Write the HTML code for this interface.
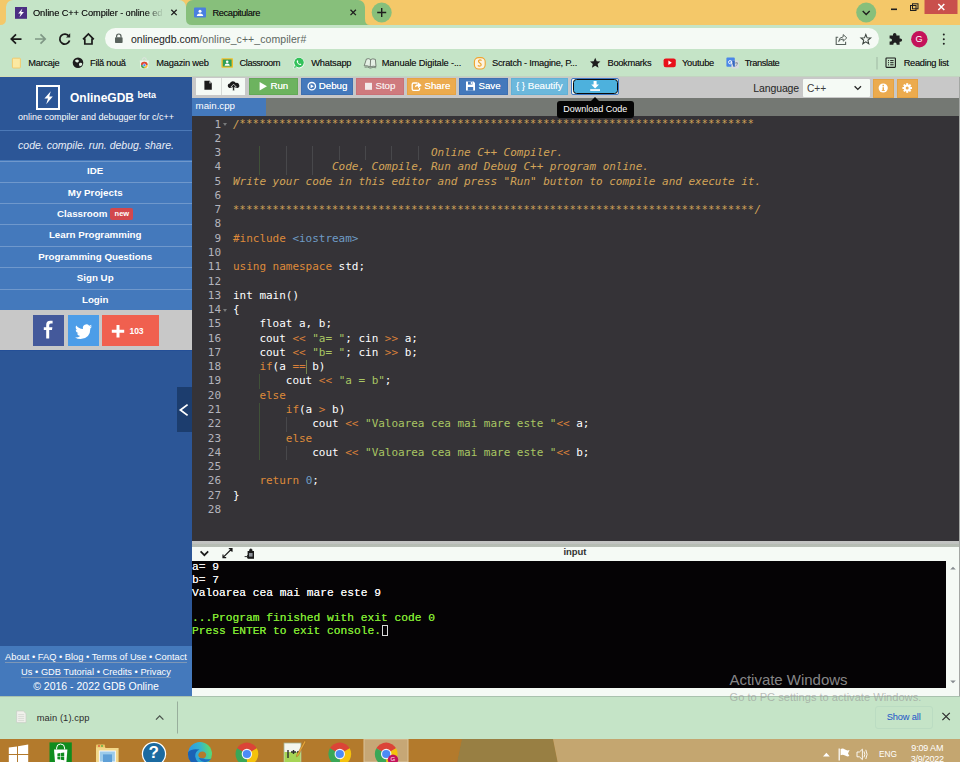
<!DOCTYPE html>
<html lang="en">
<head>
<meta charset="utf-8">
<title>Online C++ Compiler - online editor</title>
<style>
*{box-sizing:border-box;margin:0;padding:0}
html,body{width:960px;height:762px;overflow:hidden;background:#C5E4C7}
body{position:relative;font-family:"Liberation Sans",Arial,sans-serif;font-size:12px;color:#222}
.abs{position:absolute}
/* ---------- browser chrome ---------- */
#tabstrip{position:absolute;left:0;top:0;width:960px;height:26px;background:#F4C869}
#toolbar{position:absolute;left:0;top:25px;width:960px;height:52px;background:#C5E4C7}
.tab{position:absolute;top:0;height:26px;font-size:11px;color:#2a2a2a;white-space:nowrap}
.tt{font-size:9.3px;color:#161616;text-shadow:0 0 0.3px rgba(0,0,0,0.55);white-space:nowrap;line-height:13px}
#t1{letter-spacing:-0.113px}#t2{letter-spacing:-0.392px}
#tab1{left:6px;width:180px;background:#C5E4C7;border-radius:7px 7px 0 0}
#tab2{left:186px;width:179px;background:#87BF7B;border-radius:7px 7px 0 0;height:25px}
.bm{position:absolute;top:57.6px;font-size:9.3px;line-height:11px;color:#1a1a1a;text-shadow:0 0 0.3px rgba(0,0,0,0.5);white-space:nowrap}
#omni{position:absolute;left:105px;top:28px;width:774px;height:21px;border-radius:10.5px;background:#F5FAF5}
#url{position:absolute;left:26px;top:4.5px;font-size:10.5px;line-height:13px;color:#222;white-space:nowrap}
#u2{letter-spacing:0.064px}
#url span{color:#5c6660}
/* ---------- page ---------- */
#sidebar{position:absolute;left:0;top:76px;width:192px;height:620px;background:#2C5697;color:#fff}
#menu{position:absolute;left:0;top:160px;width:192px;height:151px;background:#4479BC}
#menu>div{position:absolute;left:0;width:192px;height:21.5px;border-top:1px solid #6F98CC;text-align:center;font-weight:bold;font-size:9.75px;line-height:20px;color:#fff;white-space:nowrap;padding-right:1.6px}
#sfoot u{text-decoration:none;border-bottom:1px solid rgba(160,170,180,0.62)}
#social{position:absolute;left:0;top:310px;width:192px;height:40px;background:#C8C8C8}
#sfoot{position:absolute;left:0;top:646px;width:192px;height:50px;background:#4479BC;color:#fff;text-align:center}
#ptool{position:absolute;left:192px;top:76px;width:768px;height:22px;background:#C8C8C8}
.btn{position:absolute;top:2px;height:17px;color:#fff;font-size:9.75px;line-height:13.6px;white-space:nowrap;letter-spacing:-0.05px;text-shadow:0 0 0.35px rgba(255,255,255,0.8)}
.btn span{position:absolute;top:0}
#ftabs{position:absolute;left:192px;top:98px;width:768px;height:18px;background:#747873}
#ftab{position:absolute;left:0;top:0;width:74px;height:18px;background:#4479BC;color:#fff;font-size:9.75px;line-height:16px;padding-left:3.6px;letter-spacing:-0.02px}
#editor{position:absolute;left:192px;top:116px;width:768px;height:425px;background:#353337;overflow:hidden}
#code{position:absolute;left:0;top:1.6px;width:768px;font-family:"DejaVu Sans Mono","Liberation Mono",monospace;font-size:11px;letter-spacing:-0.022px;color:#fff}
.ln{position:absolute;left:0;height:14.27px;line-height:14.27px;white-space:pre}
.ln i.n{position:absolute;left:0;width:29px;text-align:right;color:#B4B4BC;font-style:normal}
.ln b{position:absolute;left:41px;font-weight:normal;white-space:pre}
.c{color:#D3A458;font-style:italic}
.st{font-size:10px;letter-spacing:0.58px;position:relative;top:-0.2px;font-style:normal}
.k{color:#DE8A3A}
.s{color:#A9C663}
.h{color:#6F9CC6}
.o{color:#D9803A}
.g{position:absolute;width:1px;background:#48484b}
#split{position:absolute;left:192px;top:540.6px;width:768px;height:6.3px;z-index:2;background:linear-gradient(180deg,#C3C4C3 0,#C1C3C1 40%,#B5BCB3 55%,#B7BEB5 100%)}
#chead{position:absolute;left:192px;top:546px;width:768px;height:15px;background:#F5FAF5}
#console{position:absolute;left:192px;top:561px;width:754.4px;height:127px;background:#050305;font-family:"Liberation Mono",monospace;font-size:11.25px;line-height:12.93px;color:#F2F2F2;white-space:pre;font-weight:normal;text-shadow:0 0 0.5px currentColor}
#cscroll{position:absolute;left:946.4px;top:561px;width:13.6px;height:127px;background:#F5FAF5}
#cbot{position:absolute;left:192px;top:688px;width:768px;height:8px;background:#F5FAF5}
#dlbar{position:absolute;left:0;top:696px;width:960px;height:43px;background:#C5E4C7;border-top:1px solid #A9C2AE}
#taskbar{position:absolute;left:0;top:738.6px;width:960px;height:23.4px;background:#B37A2C;overflow:hidden}
#console .gr{color:#7FE331}
.cl{position:absolute;left:0;height:12.93px;white-space:pre}
#console .cur{display:inline-block;width:6px;height:11px;border:1px solid #d8d8d8;vertical-align:-2px;margin-left:0.5px}
</style>
</head>
<body>
<div id="tabstrip"></div>
<div id="toolbar"></div>
<!-- tabs -->
<div class="tab" id="tab2"></div>
<div class="tab" id="tab1"></div>
<svg class="abs" style="left:0;top:0" width="400" height="26" viewBox="0 0 400 26">
  <!-- curved feet of active tab -->
  <path d="M0 26 L0 25 Q6 25 6 19 L6 26 Z" fill="#C5E4C7"/>
  <path d="M186 19 Q186 25 192 25 L192 26 L186 26 Z" fill="#C5E4C7"/>
  <!-- favicon 1 -->
  <rect x="15" y="7" width="12" height="11.8" fill="#4B2E83"/>
  <path d="M22.4 8.4 L18.2 13.5 H20.7 L19.5 17.3 L23.9 12.1 H21.3 Z" fill="#fff"/>
  <!-- close 1 -->
  <path d="M171.3 9.7 L176.7 15.1 M176.7 9.7 L171.3 15.1" stroke="#1f1f1f" stroke-width="1.3" fill="none"/>
  <!-- favicon 2 -->
  <rect x="194" y="7.5" width="12" height="10" rx="1" fill="#4A7FE0"/>
  <circle cx="200" cy="11.3" r="1.5" fill="#fff"/>
  <path d="M196.8 16 Q196.8 13.4 200 13.4 Q203.2 13.4 203.2 16 Z" fill="#fff"/>
  <!-- close 2 -->
  <path d="M350.5 9.7 L355.9 15.1 M355.9 9.7 L350.5 15.1" stroke="#1f1f1f" stroke-width="1.3" fill="none"/>
  <path d="M365 19 Q365 25 370 25 L365 25 Z" fill="#87BF7B"/>
  <!-- new tab -->
  <circle cx="381.7" cy="12.5" r="10" fill="#87BF7B"/>
  <path d="M377.2 12.5 H386.2 M381.7 8 V17" stroke="#1f1f1f" stroke-width="1.4" fill="none"/>
</svg>
<div class="abs tt" style="left:33px;top:6.6px;width:131px;overflow:hidden;-webkit-mask-image:linear-gradient(90deg,#000 0,#000 112px,transparent 131px);mask-image:linear-gradient(90deg,#000 0,#000 112px,transparent 131px)"><span id="t1">Online C++ Compiler - online ed</span></div>
<div class="abs tt" style="left:212.5px;top:6.6px"><span id="t2">Recapitulare</span></div>
<!-- window controls -->
<svg class="abs" style="left:840px;top:0" width="120" height="26" viewBox="0 0 120 26">
  <circle cx="26.2" cy="12.5" r="10" fill="#87BF7B"/>
  <path d="M22.7 11 L26.2 14.5 L29.7 11" stroke="#1f1f1f" stroke-width="1.4" fill="none"/>
  <rect x="51" y="8.5" width="6" height="1.6" fill="#1f1f1f"/>
  <rect x="70.5" y="5.5" width="5.5" height="5" fill="none" stroke="#1f1f1f" stroke-width="1"/>
  <rect x="72.5" y="3.8" width="5.5" height="5" fill="none" stroke="#1f1f1f" stroke-width="1"/>
  <rect x="84.5" y="0" width="33" height="14" fill="#C9504C"/>
  <path d="M98.3 4 L104.3 10 M104.3 4 L98.3 10" stroke="#fff" stroke-width="1.5" fill="none"/>
</svg>
<!-- nav icons -->
<svg class="abs" style="left:0;top:26px" width="105" height="26" viewBox="0 0 105 26">
  <path d="M21.5 13 H11.5 M16 8.3 L11.3 13 L16 17.7" stroke="#1a1a1a" stroke-width="1.75" fill="none"/>
  <path d="M35 13 H45 M40.5 8.3 L45.2 13 L40.5 17.7" stroke="#7f9785" stroke-width="1.7" fill="none"/>
  <path d="M69 10.3 A5 5 0 1 0 69.6 14.6" stroke="#1a1a1a" stroke-width="1.75" fill="none"/>
  <path d="M70.2 7.2 V11.4 H66 Z" fill="#1f1f1f"/>
  <path d="M83 13.4 L88.4 8 L93.8 13.4 M84.8 12.4 V18 H92 V12.4" stroke="#1a1a1a" stroke-width="1.7" fill="none"/>
</svg>
<div id="omni">
  <svg class="abs" style="left:9px;top:5px" width="10" height="11" viewBox="0 0 10 11"><rect x="1" y="4.2" width="7.6" height="5.8" rx="0.8" fill="#58625c"/><path d="M2.6 4.6 V3.2 A2.2 2.2 0 0 1 7 3.2 V4.6" stroke="#58625c" stroke-width="1.2" fill="none"/></svg>
  <div id="url"><span id="u1" style="color:#1c1c1c">onlinegdb.com</span><span id="u2">/online_c++_compiler#</span></div>
  <svg class="abs" style="left:728px;top:3px" width="44" height="16" viewBox="0 0 44 16">
    <path d="M5.2 6.2 H3.2 V13.5 H12.6 V10.8" stroke="#58625c" stroke-width="1.1" fill="none"/>
    <path d="M5.6 10.6 Q6 6.2 10.2 5.8 V3.6 L13.8 6.9 L10.2 10.2 V8 Q7.4 8 5.6 10.6 Z" stroke="#58625c" stroke-width="1" fill="none"/>
    <path d="M32.80 3.50 L34.09 6.82 L37.65 7.02 L34.89 9.28 L35.80 12.73 L32.80 10.80 L29.80 12.73 L30.71 9.28 L27.95 7.02 L31.51 6.82 Z" stroke="#3a423d" stroke-width="1.05" fill="none"/>
  </svg>
</div>
<svg class="abs" style="left:884px;top:28px" width="72" height="22" viewBox="0 0 72 22">
  <path d="M5.6 7.4 H9 V6.6 A1.7 1.7 0 0 1 12.4 6.6 V7.4 H15.6 V10.4 H16.4 A1.7 1.7 0 0 1 16.4 13.8 H15.6 V16.8 H12.6 V16 A1.6 1.6 0 0 0 9.4 16 V16.8 H5.6 V13.6 H6.4 A1.6 1.6 0 0 0 6.4 10.4 H5.6 Z" fill="#1f1f1f"/>
  <circle cx="35.3" cy="11.2" r="8.2" fill="#C4125A"/>
  <rect x="58.8" y="5.6" width="2" height="2" rx="1" fill="#1f1f1f"/><rect x="58.8" y="10.2" width="2" height="2" rx="1" fill="#1f1f1f"/><rect x="58.8" y="14.8" width="2" height="2" rx="1" fill="#1f1f1f"/>
</svg>
<div class="abs" style="left:915.6px;top:34.2px;font-size:9px;color:#fff;font-weight:normal">G</div>
<!-- bookmarks -->
<div id="bmbar">
<svg class="abs" style="left:0;top:52px" width="960" height="24" viewBox="0 0 960 24">
  <!-- folder -->
  <rect x="12.4" y="6.2" width="8" height="9.8" rx="0.8" fill="#FBE9A2" stroke="#F3C766" stroke-width="0.9"/>
  <!-- globe -->
  <circle cx="78" cy="10.8" r="5.3" fill="#1d1d1d"/>
  <path d="M75 8.4 Q77 6.8 78.6 8 Q79.6 9.6 77.6 10.4 Q75.4 10.6 75 8.4 Z M79.4 11 Q82 10.4 82.4 12.2 Q81.4 14.6 79.6 14.2 Q78.4 12.6 79.4 11 Z" fill="#dff0e0"/>
  <!-- web store -->
  <path d="M139.8 8.4 H148.8 L148.2 16.2 H140.4 Z" fill="#EEF0EE"/>
  <path d="M142.4 8.6 V7.6 A1.9 1.9 0 0 1 146.2 7.6 V8.6" stroke="#E2E4E2" stroke-width="0.9" fill="none"/>
  <circle cx="144.3" cy="13" r="3.3" fill="#F2C230"/>
  <path d="M141 13 A3.3 3.3 0 0 1 147.6 13 Z" fill="#DB4437"/>
  <path d="M141 13 A3.3 3.3 0 0 0 144.3 16.3 L144.3 13 Z" fill="#3FA55A"/>
  <circle cx="144.3" cy="13.2" r="1.4" fill="#4C8BF5" stroke="#fff" stroke-width="0.5"/>
  <!-- classroom -->
  <rect x="221.4" y="6.2" width="11.6" height="9.6" rx="0.8" fill="#F0BE2C"/>
  <rect x="222.8" y="7.5" width="8.8" height="7" fill="#2F9E58"/>
  <circle cx="227.2" cy="9.8" r="1.3" fill="#fff"/>
  <path d="M224.6 13.8 Q224.6 11.6 227.2 11.6 Q229.8 11.6 229.8 13.8 Z" fill="#fff"/>
  <!-- whatsapp -->
  <path d="M293.2 16.6 L294.2 13.6 A5.5 5.5 0 1 1 296.2 15.6 Z" fill="#fff"/>
  <circle cx="299" cy="10.6" r="4.8" fill="#33C15A"/>
  <path d="M294 16 L294.9 13.4 L296.6 15.2 Z" fill="#33C15A"/>
  <path d="M297 8.4 Q296.4 9 297 10.4 Q298 12.4 300 13 Q301 13.2 301.4 12.4 L300.2 11.6 L299.6 12 Q298.4 11.4 297.9 10.2 L298.3 9.6 L297.7 8.3 Z" fill="#fff"/>
  <!-- book -->
  <path d="M364.2 13.8 L366.4 7 Q369 6 370.6 7.6 Q372.6 6.2 375.4 7.4 L376 14.6 Q373 13.6 370.2 15 Q367.4 13.2 364.2 13.8 Z M370.6 7.6 L370.2 15" stroke="#606860" stroke-width="0.8" fill="#e4efe4"/>
  <path d="M364.6 15.2 Q367.4 14.4 370.2 16.2 Q373 14.8 376.2 15.8" stroke="#606860" stroke-width="0.7" fill="none"/>
  <!-- scratch -->
  <rect x="474.4" y="5.6" width="10.8" height="11.4" rx="4.2" fill="#fdf3e0" stroke="#EFA42F" stroke-width="1.1"/>
  <path d="M481.6 8.4 Q479.8 7.2 478.6 8.6 Q478 10 479.8 11 Q481.8 12.2 480.8 13.6 Q479.4 14.8 477.8 13.6" stroke="#EFA42F" stroke-width="1.2" fill="none"/>
  <!-- star -->
  <path d="M595.2 5.8 L596.7 9.3 L600.4 9.6 L597.6 12 L598.5 15.7 L595.2 13.7 L591.9 15.7 L592.8 12 L590 9.6 L593.7 9.3 Z" fill="#1d1d1d"/>
  <!-- youtube -->
  <rect x="663.6" y="6.4" width="12.2" height="8.8" rx="2.2" fill="#E8111A"/>
  <path d="M668.4 8.6 L671.8 10.8 L668.4 13 Z" fill="#fff"/>
  <!-- translate -->
  <rect x="726.4" y="5.4" width="8.4" height="9.4" rx="1" fill="#4A86E8"/>
  <rect x="731.4" y="8.4" width="7.4" height="8.2" rx="1" fill="#d7dbe0"/>
  <path d="M731.4 8.4 H734.8 V14.8 H733.4 Z" fill="#3467c2"/>
  <path d="M735 11 H738 M736.4 10.2 V11 M735.4 14.4 Q737.4 13 737.4 11" stroke="#6f7780" stroke-width="0.6" fill="none"/>
  <circle cx="730.2" cy="10.2" r="1.7" fill="none" stroke="#fff" stroke-width="0.9"/>
  <path d="M730.2 10.2 H732" stroke="#fff" stroke-width="0.9"/>
  <!-- separator -->
  <rect x="876.5" y="5" width="1" height="12.5" fill="#9fb7a3"/>
  <!-- reading list -->
  <rect x="886" y="6" width="9.4" height="9.4" rx="0.6" fill="none" stroke="#1d1d1d" stroke-width="1.1"/>
  <path d="M888 8.6 H889 M890.2 8.6 H893.6 M888 10.7 H889 M890.2 10.7 H893.6 M888 12.8 H889 M890.2 12.8 H893.6" stroke="#1d1d1d" stroke-width="1"/>
</svg>
<span class="bm" style="left:28.25px;letter-spacing:-0.261px">Marcaje</span>
<span class="bm" style="left:90px;letter-spacing:-0.278px">Filă nouă</span>
<span class="bm" style="left:156.25px;letter-spacing:-0.207px">Magazin web</span>
<span class="bm" style="left:239.5px;letter-spacing:-0.438px">Classroom</span>
<span class="bm" style="left:311.25px;letter-spacing:-0.232px">Whatsapp</span>
<span class="bm" style="left:381.75px;letter-spacing:-0.152px">Manuale Digitale -...</span>
<span class="bm" style="left:492px;letter-spacing:-0.251px">Scratch - Imagine, P...</span>
<span class="bm" style="left:607.5px;letter-spacing:-0.306px">Bookmarks</span>
<span class="bm" style="left:682px;letter-spacing:-0.257px">Youtube</span>
<span class="bm" style="left:744.7px;letter-spacing:-0.414px">Translate</span>
<span class="bm" style="left:903.7px;letter-spacing:-0.307px">Reading list</span>
</div>

<div id="sidebar">
  <div class="abs" style="left:36px;top:9px;width:24px;height:25px;border:2px solid #fff"></div>
  <svg class="abs" style="left:36px;top:9px" width="25" height="25" viewBox="0 0 25 25"><path d="M14.8 6.2 L8.4 13.6 H12 L10.2 19.2 L16.8 11.6 H13.2 Z" fill="#fff"/></svg>
  <div class="abs" id="sb-title" style="left:70px;top:14.8px;font-weight:bold;font-size:12px;line-height:15px;white-space:nowrap">OnlineGDB</div>
  <div class="abs" id="sb-beta" style="left:137.5px;top:13.8px;font-weight:bold;font-size:9px;line-height:11px">beta</div>
  <div class="abs" id="sb-sub" style="left:0;top:35.5px;width:192px;text-align:center;font-size:9px;line-height:11px;white-space:nowrap">online compiler and debugger for c/c++</div>
  <div class="abs" style="left:0;top:54px;width:192px;height:1px;background:#4C79B7"></div>
  <div class="abs" id="sb-tag" style="left:0;top:63px;width:192px;text-align:center;font-size:10.5px;line-height:13px;font-style:italic;white-space:nowrap;color:#e8eef8">code. compile. run. debug. share.</div>
  <div class="abs" style="left:0;top:274px;width:192px;height:1px;background:#244F97"></div>
  <div class="abs" style="left:177px;top:311px;width:15px;height:45px;background:#1C3D6E"></div>
  <svg class="abs" style="left:177px;top:311px" width="15" height="45" viewBox="0 0 15 45"><path d="M10.6 17.6 L3.4 23 L10.6 28.4" stroke="#fff" stroke-width="1.8" fill="none"/></svg>
</div>
<div id="menu">
  <div style="top:0.8px;line-height:18.4px">IDE</div>
  <div style="top:21.5px">My Projects</div>
  <div style="top:42.9px"><span style="margin-right:26px">Classroom</span><span class="abs" style="left:110.3px;top:4.2px;width:23.2px;height:11.6px;border-radius:2px;background:#D2484D;font-size:7.5px;line-height:11.4px;font-style:normal;text-align:center;padding-right:0">new</span></div>
  <div style="top:64.3px">Learn Programming</div>
  <div style="top:85.5px">Programming Questions</div>
  <div style="top:107.2px">Sign Up</div>
  <div style="top:128.9px">Login</div>
</div>
<div id="social">
  <div class="abs" style="left:33px;top:5px;width:31px;height:31px;background:#44599B"></div>
  <div class="abs" style="left:68px;top:5px;width:31px;height:31px;background:#4C9DE8"></div>
  <div class="abs" style="left:102px;top:5px;width:57px;height:31px;background:#F0604F"></div>
  <svg class="abs" style="left:33px;top:5px" width="126" height="31" viewBox="0 0 126 31">
    <path d="M19.6 8.4 H17.8 Q16.2 8.4 16.2 10.2 V12.2 H19.4 L19 15 H16.2 V23.4 H13.2 V15 H10.8 V12.2 H13.2 V9.8 Q13.2 5.8 17.2 5.8 H19.6 Z" fill="#fff"/>
    <path d="M59.2 11.2 Q58.2 11.7 57 11.8 Q58.2 11.1 58.6 9.8 Q57.5 10.5 56.2 10.7 A3.6 3.6 0 0 0 50 14 Q45.8 13.8 43.2 10.4 Q41.8 13.2 44.2 15.2 Q43.4 15.2 42.6 14.8 Q42.7 17.5 45.5 18.3 Q44.7 18.5 43.9 18.4 Q44.7 20.6 47.2 20.9 Q45 22.6 42 22.4 Q44.6 24 47.6 24 Q57.2 23.6 57.4 13.2 Q58.5 12.4 59.2 11.2 Z" fill="#fff"/>
    <path d="M78.8 16.2 H91.2 M85 10 V22.4" stroke="#fff" stroke-width="3" fill="none"/>
  </svg>
  <div class="abs" style="left:129.5px;top:15.5px;font-size:8.6px;line-height:10px;font-weight:bold;color:#fff;letter-spacing:-0.1px">103</div>
</div>
<div id="sfoot">
  <div id="sf1" style="position:absolute;left:0;top:5px;width:192px;font-size:9.3px;line-height:12px;white-space:nowrap"><u>About • FAQ • Blog • Terms of Use • Contact</u></div>
  <div id="sf2" style="position:absolute;left:0;top:20px;width:192px;font-size:9.3px;line-height:12px;white-space:nowrap"><u>Us • GDB Tutorial • Credits • Privacy</u></div>
  <div id="sf3" style="position:absolute;left:0;top:33.5px;width:192px;font-size:10.5px;line-height:13px;white-space:nowrap">© 2016 - 2022 GDB Online</div>
</div>
<div id="ptool">
  <div class="btn" style="left:4px;width:24.5px;background:#F5FAF5"></div>
  <div class="btn" style="left:29px;width:24px;background:#F5FAF5;border-left:1px solid #d6dad6"></div>
  <div class="btn" style="left:57px;width:49px;background:#6DB35F;border:1px solid #63A957"><span style="left:20.5px">Run</span></div>
  <div class="btn" style="left:109px;width:51.5px;background:#4479BC;border:1px solid #3E6FB0"><span style="left:16.8px">Debug</span></div>
  <div class="btn" style="left:163.5px;width:48.5px;background:#CF7A7E;border:1px solid #C97278"><span style="left:19px;color:#f6e6e6">Stop</span></div>
  <div class="btn" style="left:214.5px;width:49.5px;background:#ECAB4E;border:1px solid #E6A444"><span style="left:17px">Share</span></div>
  <div class="btn" style="left:267px;width:49px;background:#4479BC;border:1px solid #3E6FB0"><span style="left:18.5px">Save</span></div>
  <div class="btn" style="left:319px;width:57px;background:#6CB8DC;border:1px solid #62B0D6"><span style="left:4px;color:#eef8fc">{ } Beautify</span></div>
  <div class="abs" style="left:379.2px;top:1.8px;width:48px;height:17.4px;border:1px solid #3F79C6;border-radius:2px;background:#F5FAF5"></div>
  <div class="abs" style="left:380.6px;top:3px;width:45.2px;height:15px;border:1.9px solid #0a0a0a;border-radius:3.5px;background:#4DB1DD"></div>
  <svg class="abs" style="left:0;top:0" width="440" height="22" viewBox="0 0 440 22">
    <!-- file -->
    <path d="M12.4 4.8 H17 L19.8 7.6 V13.8 H12.4 Z" fill="#1b1b1b"/><path d="M17.2 4.8 V7.4 H19.8 Z" fill="#f5faf5" stroke="#1b1b1b" stroke-width="0.5"/>
    <!-- cloud upload -->
    <path d="M37.4 12 A2.3 2.3 0 0 1 37.8 7.5 A3.2 3.2 0 0 1 43.8 7.1 A2.5 2.5 0 0 1 45.6 12 Z" fill="#1b1b1b"/>
    <path d="M41.6 8.2 L44.4 11.2 H42.6 V14.8 H40.6 V11.2 H38.8 Z" fill="#1b1b1b" stroke="#f5faf5" stroke-width="0.7"/>
    <!-- run -->
    <path d="M67.6 6 L75 10.3 L67.6 14.6 Z" fill="#fff"/>
    <!-- debug -->
    <circle cx="119.8" cy="10.2" r="3.7" fill="none" stroke="#fff" stroke-width="1.3"/><path d="M118.6 8.2 L121.8 10.2 L118.6 12.2 Z" fill="#fff"/>
    <!-- stop -->
    <rect x="173" y="6.8" width="7" height="7" fill="#f3e9e9"/>
    <!-- share -->
    <path d="M225.6 7 H221.6 Q220.2 7 220.2 8.4 V13 Q220.2 14.4 221.6 14.4 H226.2 Q227.6 14.4 227.6 13 V11.8" stroke="#fff" stroke-width="1.3" fill="none"/>
    <path d="M222.8 11.6 Q223 8.2 226 8.2 V6.2 L229.6 9.2 L226 12.2 V10.2 Q224 10.2 222.8 11.6 Z" fill="#fff"/>
    <!-- save -->
    <path d="M274 5.6 H281.6 L283 7 V14.6 H274 Z" fill="#fff"/><rect x="276" y="5.6" width="4.4" height="3" fill="#4479BC"/><rect x="278.8" y="6" width="1.1" height="2.2" fill="#fff"/><rect x="275.8" y="11" width="5.4" height="3.6" fill="#4479BC"/>
    <!-- download -->
    <path d="M401.6 5 H404.6 V8.6 H407 L403.1 12.4 L399.2 8.6 H401.6 Z" fill="#fff"/><rect x="398.2" y="13.2" width="9.8" height="1.7" fill="#fff"/>
  </svg>
  <div class="abs" style="left:561.3px;top:6px;font-size:10.5px;line-height:13px;color:#262626;letter-spacing:-0.12px">Language</div>
  <div class="abs" style="left:611px;top:2.5px;width:66.5px;height:18.5px;background:#F5FAF5;border-radius:1px"></div>
  <div class="abs" style="left:615px;top:6px;font-size:10.2px;line-height:13px;color:#3c3c3c">C++</div>
  <svg class="abs" style="left:660px;top:7px" width="12" height="10" viewBox="0 0 12 10"><path d="M2.6 3.2 L5.8 6.4 L9 3.2" stroke="#222" stroke-width="1.3" fill="none"/></svg>
  <div class="abs" style="left:681px;top:3px;width:20.5px;height:18.5px;background:#ECAB4E;border:1px solid #E5A343"></div>
  <div class="abs" style="left:705px;top:3px;width:20.5px;height:18.5px;background:#ECAB4E;border:1px solid #E5A343"></div>
  <svg class="abs" style="left:681px;top:3px" width="46" height="19" viewBox="0 0 46 19">
    <circle cx="10.2" cy="9" r="4.6" fill="#fff"/><rect x="9.5" y="5.8" width="1.5" height="1.5" fill="#ECAB4E"/><rect x="9.5" y="8.2" width="1.5" height="3.4" fill="#ECAB4E"/><rect x="8.8" y="11" width="3" height="0.9" fill="#ECAB4E"/>
    <g fill="#fff"><circle cx="34.2" cy="9" r="3.5"/><rect x="33.2" y="4.2" width="2" height="9.6"/><rect x="29.4" y="8" width="9.6" height="2"/><rect x="33.2" y="4.2" width="2" height="9.6" transform="rotate(45 34.2 9)"/><rect x="33.2" y="4.2" width="2" height="9.6" transform="rotate(-45 34.2 9)"/></g>
    <circle cx="34.2" cy="9" r="1.5" fill="#ECAB4E"/>
  </svg>
</div>
<!-- tooltip -->
<div class="abs" style="left:557px;top:101.2px;width:76.5px;height:16.6px;background:#050505;border-radius:3px;z-index:5;color:#fff;font-size:9px;line-height:16px;text-align:center">Download Code</div>
<div class="abs" style="left:591.2px;top:97.4px;width:0;height:0;border-left:4px solid transparent;border-right:4px solid transparent;border-bottom:4px solid #050505;z-index:5"></div>
<div id="ftabs"><div id="ftab">main.cpp</div></div>
<div id="editor"><div id="code">
<div class="ln" style="top:0.0px"><i class="n">1</i><b><span class="c">/<span class="st">******************************************************************************</span></span></b></div>
<div class="ln" style="top:14.27px"><i class="n">2</i><b></b></div>
<div class="ln" style="top:28.54px"><i class="n">3</i><b><span class="c">                              Online C++ Compiler.</span></b></div>
<div class="ln" style="top:42.81px"><i class="n">4</i><b><span class="c">               Code, Compile, Run and Debug C++ program online.</span></b></div>
<div class="ln" style="top:57.08px"><i class="n">5</i><b><span class="c">Write your code in this editor and press "Run" button to compile and execute it.</span></b></div>
<div class="ln" style="top:71.35px"><i class="n">6</i><b></b></div>
<div class="ln" style="top:85.62px"><i class="n">7</i><b><span class="c"><span class="st">*******************************************************************************</span>/</span></b></div>
<div class="ln" style="top:99.89px"><i class="n">8</i><b></b></div>
<div class="ln" style="top:114.16px"><i class="n">9</i><b><span class="k">#include </span><span class="h">&lt;iostream&gt;</span></b></div>
<div class="ln" style="top:128.43px"><i class="n">10</i><b></b></div>
<div class="ln" style="top:142.7px"><i class="n">11</i><b><span class="k">using namespace</span> std;</b></div>
<div class="ln" style="top:156.97px"><i class="n">12</i><b></b></div>
<div class="ln" style="top:171.24px"><i class="n">13</i><b>int main()</b></div>
<div class="ln" style="top:185.51px"><i class="n">14</i><b>{</b></div>
<div class="ln" style="top:199.78px"><i class="n">15</i><b>    float a, b;</b></div>
<div class="ln" style="top:214.05px"><i class="n">16</i><b>    cout <span class="o">&lt;&lt;</span> <span class="s">"a= "</span>; cin <span class="o">&gt;&gt;</span> a;</b></div>
<div class="ln" style="top:228.32px"><i class="n">17</i><b>    cout <span class="o">&lt;&lt;</span> <span class="s">"b= "</span>; cin <span class="o">&gt;&gt;</span> b;</b></div>
<div class="ln" style="top:242.59px"><i class="n">18</i><b>    <span class="k">if</span>(a <span class="o">==</span> b)</b></div>
<div class="ln" style="top:256.86px"><i class="n">19</i><b>        cout <span class="o">&lt;&lt;</span> <span class="s">"a = b"</span>;</b></div>
<div class="ln" style="top:271.13px"><i class="n">20</i><b>    <span class="k">else</span></b></div>
<div class="ln" style="top:285.4px"><i class="n">21</i><b>        <span class="k">if</span>(a <span class="o">&gt;</span> b)</b></div>
<div class="ln" style="top:299.67px"><i class="n">22</i><b>            cout <span class="o">&lt;&lt;</span> <span class="s">"Valoarea cea mai mare este "</span><span class="o">&lt;&lt;</span> a;</b></div>
<div class="ln" style="top:313.94px"><i class="n">23</i><b>        <span class="k">else</span></b></div>
<div class="ln" style="top:328.21px"><i class="n">24</i><b>            cout <span class="o">&lt;&lt;</span> <span class="s">"Valoarea cea mai mare este "</span><span class="o">&lt;&lt;</span> b;</b></div>
<div class="ln" style="top:342.48px"><i class="n">25</i><b></b></div>
<div class="ln" style="top:356.75px"><i class="n">26</i><b>    <span class="k">return</span> <span class="h">0</span>;</b></div>
<div class="ln" style="top:371.02px"><i class="n">27</i><b>}</b></div>
<div class="ln" style="top:385.29px"><i class="n">28</i><b></b></div>
<div class="g" style="left:67.4px;top:28.54px;height:28.54px;background:#405238"></div>
<div class="g" style="left:93.8px;top:28.54px;height:28.54px"></div>
<div class="g" style="left:120.2px;top:28.54px;height:28.54px"></div>
<div class="g" style="left:146.6px;top:28.54px;height:14.27px"></div>
<div class="g" style="left:173.0px;top:28.54px;height:14.27px"></div>
<div class="g" style="left:199.4px;top:28.54px;height:14.27px"></div>
<div class="g" style="left:225.8px;top:28.54px;height:14.27px"></div>
<div class="g" style="left:67.4px;top:256.86px;height:14.27px;background:#405238"></div>
<div class="g" style="left:67.4px;top:285.4px;height:57.08px;background:#405238"></div>
<div class="g" style="left:93.8px;top:299.67px;height:14.27px"></div>
<div class="g" style="left:93.8px;top:328.21px;height:14.27px"></div>
<div style="position:absolute;left:31px;top:5.5px;width:0;height:0;border-left:2.5px solid transparent;border-right:2.5px solid transparent;border-top:3px solid #77797a"></div>
<div style="position:absolute;left:31px;top:191.01px;width:0;height:0;border-left:2.5px solid transparent;border-right:2.5px solid transparent;border-top:3px solid #77797a"></div>
<div style="position:absolute;left:113.6px;top:242.59px;width:1px;height:14px;background:#73864c"></div>
</div></div>
<div id="split"></div>
<div id="chead">
  <svg class="abs" style="left:0;top:0" width="80" height="15" viewBox="0 0 80 15">
    <path d="M8.6 5.4 L12.4 9.2 L16.2 5.4" stroke="#1a1a1a" stroke-width="1.7" fill="none"/>
    <path d="M31.4 11.2 L39.6 3 M31 8.4 V11.6 H34.2 M36.8 2.6 H40 V5.8" stroke="#1a1a1a" stroke-width="1.2" fill="none"/>
    <rect x="55.6" y="5" width="6.4" height="7.8" fill="#1a1a1a"/><rect x="57.2" y="3.4" width="3.2" height="2.4" fill="#1a1a1a"/><circle cx="58.8" cy="3.4" r="1" fill="#1a1a1a"/><rect x="57" y="7" width="3.6" height="3.6" fill="#8a8f96"/>
    <path d="M52.6 10.6 H56.4 M55 9.2 L56.6 10.6 L55 12" stroke="#1a1a1a" stroke-width="0.9" fill="none"/>
  </svg>
  <div class="abs" id="cin" style="left:371.5px;top:0;font-size:9.5px;line-height:11px;color:#333;font-weight:bold;letter-spacing:-0.1px">input</div>
</div>
<div id="console">
<div class="cl" style="top:-0.5px">a= 9</div>
<div class="cl" style="top:12.9px">b= 7</div>
<div class="cl" style="top:25.9px">Valoarea cea mai mare este 9</div>
<div class="cl gr" style="top:51.22px">...Program finished with exit code 0</div>
<div class="cl gr" style="top:64.15px">Press ENTER to exit console.<span class="cur"></span></div>
</div>
<div id="cscroll">
  <svg class="abs" style="left:0;top:0" width="14" height="128" viewBox="0 0 14 128"><path d="M4.2 8.6 L7 5.8 L9.8 8.6 Z M4.2 119.4 L7 122.2 L9.8 119.4 Z" fill="#878c90"/></svg>
</div>
<div id="cbot"></div>
<div class="abs" style="left:729.5px;top:670.5px;font-size:15px;line-height:18px;color:rgba(200,200,200,0.68);white-space:nowrap;z-index:6;letter-spacing:-0.02px">Activate Windows</div>
<div class="abs" style="left:729.5px;top:690.5px;font-size:11.1px;line-height:13px;color:rgba(150,150,150,0.62);white-space:nowrap;z-index:6">Go to PC settings to activate Windows.</div>
<div id="dlbar">
  <svg class="abs" style="left:0;top:0" width="200" height="42" viewBox="0 0 200 42">
    <path d="M16.6 14 H23.4 L26 16.6 V25.6 H16.6 Z" fill="#F1F1EC" stroke="#C9CDC6" stroke-width="0.7"/>
    <path d="M18.2 17.6 H24.2 M18.2 19.6 H24.2 M18.2 21.6 H24.2 M18.2 23.6 H24.2" stroke="#cfd3cc" stroke-width="0.7"/>
    <path d="M156 22.6 L159.7 18.9 L163.4 22.6" stroke="#4a524c" stroke-width="1.3" fill="none"/>
    <rect x="177" y="4.5" width="1" height="32" fill="#98AE9C"/>
  </svg>
  <div class="abs" style="left:36.75px;top:15px;font-size:9.3px;line-height:12px;color:#2b2b2b;letter-spacing:0.09px;white-space:nowrap">main (1).cpp</div>
  <div class="abs" style="left:875px;top:8.5px;width:58px;height:23.5px;border:1px solid #BBDCC2;border-radius:3px"></div>
  <div class="abs" style="left:886.7px;top:13.5px;font-size:9.3px;line-height:12px;color:#1B55C8;letter-spacing:-0.143px;white-space:nowrap">Show all</div>
  <svg class="abs" style="left:940px;top:14px" width="12" height="12" viewBox="0 0 12 12"><path d="M2.4 1.8 L9.8 9.2 M9.8 1.8 L2.4 9.2" stroke="#2a2a2a" stroke-width="1.2" fill="none"/></svg>
</div>
<div id="taskbar">
  <svg class="abs" style="left:0;top:0" width="960" height="23" viewBox="0 0 960 23">
    <!-- wallpaper shapes showing through -->
    <path d="M461.8 0 L553 0 L557.6 23 L457 23 Z" fill="#987F43"/>
    <path d="M553 0 H960 V23 H557.6 Z" fill="#C4A670"/>
    <path d="M408 0 H461.8 L457 23 H408 Z" fill="#B37A2C"/>
    <!-- active app -->
    <rect x="364" y="0" width="44" height="23" fill="#C6A776"/><rect x="364" y="0" width="44" height="23" fill="none" stroke="#DCC39A" stroke-width="1"/>
    <!-- windows logo -->
    <path d="M8.8 8.6 L17 7.4 V15 H8.8 Z M18 7.2 L28.2 5.6 V15 H18 Z M8.8 16 H17 V23 H8.8 Z M18 16 H28.2 V23 H18 Z" fill="#fff"/>
    <!-- store -->
    <rect x="49.5" y="3.4" width="22.3" height="19.6" fill="#0F8C1E"/>
    <path d="M56.6 10.4 V9 A4 4 0 0 1 64.6 9 V10.4" stroke="#fff" stroke-width="1" fill="none"/>
    <path d="M54 10.6 H67.4 L66.4 23 H55 Z" fill="#fff"/>
    <path d="M57.4 14.4 L60.2 14 V17 H57.4 Z M60.8 13.9 L64.2 13.4 V17 H60.8 Z M57.4 17.6 H60.2 V20.6 L57.4 20.2 Z M60.8 17.6 H64.2 V21.2 L60.8 20.7 Z" fill="#0F8C1E"/>
    <!-- folder -->
    <path d="M96 7 H104 L105.6 9 H118.6 V23 H96 Z" fill="#F3D88A"/>
    <rect x="96" y="5.6" width="9" height="3" rx="1" fill="#E9C766"/>
    <rect x="99.4" y="12" width="16" height="11" fill="#9CCBEA" stroke="#f7f7f7" stroke-width="1"/>
    <rect x="103" y="15.4" width="9" height="7.6" fill="#5E9FD6"/>
    <circle cx="99" cy="7" r="0.9" fill="#E0533E"/><circle cx="102" cy="7" r="0.9" fill="#53B04B"/>
    <!-- help -->
    <circle cx="154" cy="15" r="11.6" fill="#1B6AA0" stroke="#fff" stroke-width="1.3"/>
    <!-- edge -->
    <defs><linearGradient id="eg" x1="0" y1="0.3" x2="1" y2="0.1"><stop offset="0" stop-color="#2D97E6"/><stop offset="0.5" stop-color="#35B4CE"/><stop offset="0.85" stop-color="#55D67B"/></linearGradient></defs>
    <circle cx="200" cy="15" r="12" fill="url(#eg)"/>
    <path d="M188.2 13 A12 12 0 0 0 206 25.4 Q196.6 25.6 195.2 17.4 Q195 12.6 199.6 10.6 Q192 9 188.2 13 Z" fill="#1B62B5"/>
    <path d="M198.2 16.2 Q198.6 12.2 203 12.4 Q206 13 206.2 15.8 Q206 18.8 203 19.4 Q199.4 19.6 198.2 16.2 Z" fill="#B37A2C"/>
    <path d="M198.6 19 Q201 23.4 206 23 Q209.6 22.4 211.4 19.4 Q207.4 21.2 203.6 19.4 Z" fill="#1C6FC4"/>
    <path d="M246.9 15.0 L237.03 9.30 A11.4 11.4 0 0 1 256.77 9.30 Z" fill="#DB4437"/><path d="M246.9 15.0 L256.77 9.30 A11.4 11.4 0 0 1 246.90 26.40 Z" fill="#F4C20D"/><path d="M246.9 15.0 L246.90 26.40 A11.4 11.4 0 0 1 237.03 9.30 Z" fill="#3AA757"/><circle cx="246.9" cy="15" r="5.24" fill="#f4f4f4"/><circle cx="246.9" cy="15" r="4.10" fill="#4C8BF5"/><path d="M339.8 15.0 L329.93 9.30 A11.4 11.4 0 0 1 349.67 9.30 Z" fill="#DB4437"/><path d="M339.8 15.0 L349.67 9.30 A11.4 11.4 0 0 1 339.80 26.40 Z" fill="#F4C20D"/><path d="M339.8 15.0 L339.80 26.40 A11.4 11.4 0 0 1 329.93 9.30 Z" fill="#3AA757"/><circle cx="339.8" cy="15" r="5.24" fill="#f4f4f4"/><circle cx="339.8" cy="15" r="4.10" fill="#4C8BF5"/><path d="M386.2 15.0 L376.33 9.30 A11.4 11.4 0 0 1 396.07 9.30 Z" fill="#DB4437"/><path d="M386.2 15.0 L396.07 9.30 A11.4 11.4 0 0 1 386.20 26.40 Z" fill="#F4C20D"/><path d="M386.2 15.0 L386.20 26.40 A11.4 11.4 0 0 1 376.33 9.30 Z" fill="#3AA757"/><circle cx="386.2" cy="15" r="5.24" fill="#f4f4f4"/><circle cx="386.2" cy="15" r="4.10" fill="#4C8BF5"/>
    <circle cx="393" cy="20.6" r="5.2" fill="#C4125A"/>
    <!-- notepad++ -->
    <rect x="284" y="4" width="17" height="19" fill="#F4F6EE" stroke="#A9B38F" stroke-width="0.8"/>
    <rect x="284.4" y="13" width="16.2" height="10" fill="#A6D455"/>
    <path d="M288 11 V19 M291 13 H296 M293.5 11 V15 M297 13 H300" stroke="#2d2d2d" stroke-width="1.4" fill="none"/>
    <path d="M304.6 1.6 L306 2.8 L298 17 L296.4 17.8 L296.6 16 Z" fill="#E7A63A" stroke="#8a5a1a" stroke-width="0.4"/>
    <!-- tray -->
    <path d="M823 17.6 L826.4 13.8 L829.8 17.6 Z" fill="#fff"/>
    <path d="M839.2 9.4 V21.6" stroke="#fff" stroke-width="1.2" fill="none"/>
    <path d="M840.6 10 Q843 9 845 10.6 Q847 12 849.6 11 L848 14.4 L849.4 17 Q847 18 845 16.6 Q843 15.2 840.6 16.2 Z" fill="#fff"/>
    <path d="M857 13 H859.4 L862.4 10.2 V20.6 L859.4 17.8 H857 Z" fill="none" stroke="#fff" stroke-width="0.9"/>
    <path d="M864 12.4 Q865.6 15.4 864 18.4 M865.8 10.8 Q868.4 15.4 865.8 20" stroke="#fff" stroke-width="0.9" fill="none"/>
  </svg>
  <div class="abs" style="left:148.6px;top:4px;font-size:17px;line-height:20px;font-weight:bold;color:#fff">?</div>
  <div class="abs" style="left:390.6px;top:16.6px;font-size:6px;line-height:8px;color:#fff">G</div>
  <div class="abs" style="left:879px;top:10.5px;font-size:8.3px;line-height:10px;color:#fff;white-space:nowrap">ENG</div>
  <div class="abs" style="left:911.3px;top:4px;font-size:9px;line-height:11px;color:#fff;letter-spacing:-0.147px;white-space:nowrap">9:09 AM</div>
  <div class="abs" style="left:910.8px;top:15.6px;font-size:9px;line-height:11px;color:#fff;letter-spacing:-0.268px;white-space:nowrap">3/9/2022</div>
</div>
<div class="abs" style="left:0;top:76px;width:192px;height:1px;background:#D5DDB4;z-index:7"></div>
<div class="abs" style="left:192px;top:76px;width:768px;height:1px;background:#C2D4C0;z-index:7"></div>
<div class="abs" style="left:959px;top:77px;width:1px;height:619px;background:#A4A7A4;z-index:7"></div>
</body>
</html>
